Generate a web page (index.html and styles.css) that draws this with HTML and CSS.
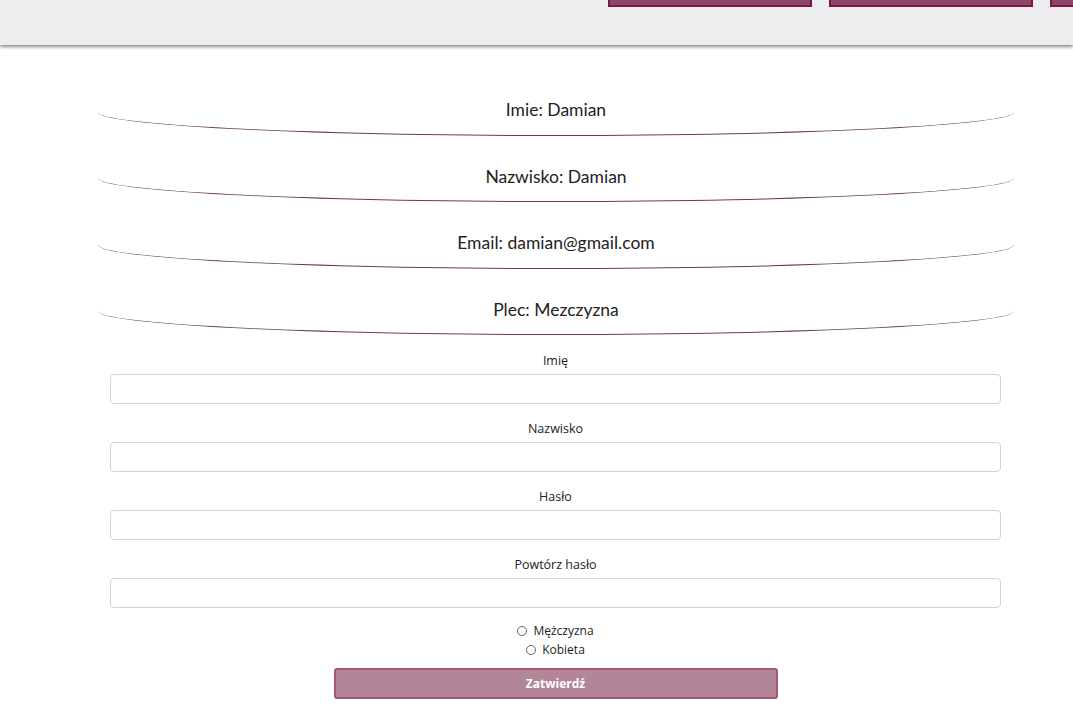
FILE: index.html
```html
<!DOCTYPE html>
<html lang="pl">
<head>
<meta charset="utf-8">
<link rel="stylesheet" href="styles.css">
</head>
<body>
<header class="topbar">
  <nav class="nav">
    <a class="nav-btn"></a>
    <a class="nav-btn"></a>
    <a class="nav-btn"></a>
  </nav>
</header>
<main class="content">
  <section class="info">
    <div class="info-row">Imie: Damian</div>
    <div class="info-row">Nazwisko: Damian</div>
    <div class="info-row">Email: damian@gmail.com</div>
    <div class="info-row">Plec: Mezczyzna</div>
  </section>
  <form class="form">
    <label class="field"><span class="label">Imię</span><input class="input" type="text"></label>
    <label class="field"><span class="label">Nazwisko</span><input class="input" type="text"></label>
    <label class="field"><span class="label">Hasło</span><input class="input" type="password"></label>
    <label class="field"><span class="label">Powtórz hasło</span><input class="input" type="password"></label>
    <div class="radios">
      <label class="radio"><span class="dot"></span>Mężczyzna</label>
      <label class="radio"><span class="dot"></span>Kobieta</label>
    </div>
    <button class="submit" type="button">Zatwierdź</button>
  </form>
</main>
</body>
</html>
```
FILE: styles.css
```css
* { box-sizing: border-box; }
html, body { margin: 0; padding: 0; background: #fff; }
body { font-family: "Lato", "Open Sans", sans-serif; color: #212529; }

.topbar {
  height: 45px;
  background: #ededef;
  box-shadow: 0 2px 3px rgba(0,0,0,0.45);
  position: relative;
}
.nav {
  display: flex;
  gap: 17px;
  padding-left: 608px;
  overflow: hidden;
  height: 7px;
}
.nav-btn {
  flex: 0 0 204px;
  height: 7px;
  background: #8b4668;
  border: 2px solid #7b1648;
  border-top: none;
}

.content { padding-top: 50px; }

.info { width: 916px; margin-left: 98px; display: flex; flex-direction: column; gap: 26px; }
.info-row {
  height: 40.5px;
  padding-top: 4px;
  line-height: 21px;
  text-align: center;
  font-size: 17.5px;
  color: #222;
  border-bottom: 1.4px solid #6a3a56;
  border-radius: 0 0 50% 50% / 0 0 24px 24px;
}

.form { width: 891px; margin: 18px 0 0 110px; display: flex; flex-direction: column; align-items: center; }
.field { display: flex; flex-direction: column; align-items: center; width: 100%; margin-bottom: 17px; }
.label { font-size: 12.5px; color: #222; line-height: 16px; margin-bottom: 5px; font-family: "Open Sans", sans-serif; }
.input {
  width: 100%;
  height: 30px;
  border: 1px solid #ced4da;
  border-radius: 4px;
  background: #fff;
}
.field:nth-child(4) { margin-bottom: 14px; }

.radios { display: flex; flex-direction: column; align-items: center; font-size: 12px; font-family: "Open Sans", sans-serif; color: #222; gap: 2px; }
.radio { display: flex; align-items: center; gap: 6px; line-height: 17px; }
.dot { width: 10px; height: 10px; border: 1px solid #666; border-radius: 50%; background: #fff; }

.submit {
  margin-top: 10px;
  width: 444px;
  height: 31px;
  background: #b38598;
  border: 2px solid #a5577a;
  border-radius: 3px;
  color: #fff;
  font-weight: 700;
  font-size: 12px;
  font-family: "Open Sans", sans-serif;
}
```
